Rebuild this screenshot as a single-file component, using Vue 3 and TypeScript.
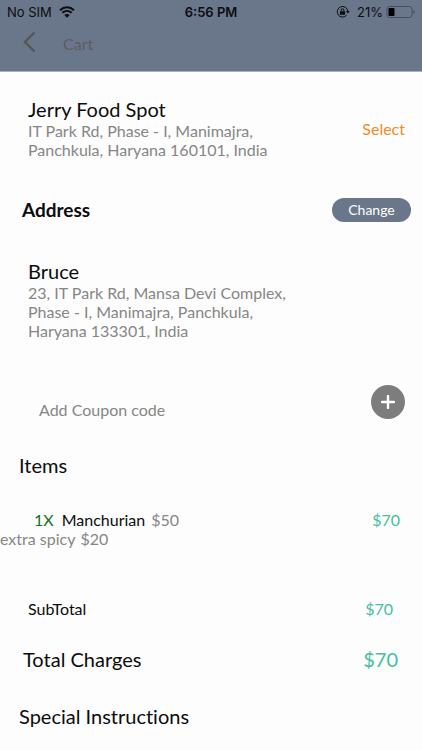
<script setup lang="ts">
import { ref } from 'vue'

interface CartItem {
  quantity: number
  name: string
  price: number
  extra: string
  extraPrice: number
}

const items: CartItem[] = [
  { quantity: 1, name: 'Manchurian', price: 50, extra: 'extra spicy', extraPrice: 20 },
]
const total = items.reduce((sum, i) => sum + i.quantity * (i.price + i.extraPrice), 0)
const coupon = ref('')
</script>

<template>
  <div class="screen">
    <header class="top">
      <div class="status">
        <div class="status-side">
          <span>No SIM</span>
          <svg class="wifi" width="16" height="12" viewBox="0 0 16 12" aria-hidden="true">
            <path d="M1 4.2C5 .4 11 .4 15 4.2" />
            <path d="M3.4 6.8c2.7-2.5 6.5-2.5 9.2 0" />
            <path class="solid" d="M8 11.8 5.3 9c1.5-1.4 3.9-1.4 5.4 0z" />
          </svg>
        </div>
        <span class="clock">6:56 PM</span>
        <div class="status-side right">
          <svg class="lock" width="14" height="14" viewBox="0 0 14 14" aria-hidden="true">
            <path d="M10.6 10.2A5.3 5.3 0 1 1 11.8 6" />
            <path class="solid" d="M9.9 6h3.8l-1.9 2.6zM3.9 6.2h5.2v3.6H3.9z" />
            <path d="M5.2 6.2V5a1.3 1.3 0 0 1 2.6 0v1.2" />
          </svg>
          <span>21%</span>
          <svg class="battery" width="30" height="14" viewBox="0 0 30 14" aria-hidden="true">
            <rect class="shell" x="1" y="1.5" width="25" height="11" rx="2.5" />
            <rect x="2.5" y="3" width="6" height="8" rx="1" />
            <path class="tip" d="M27.5 5c1.7.5 1.7 3.5 0 4z" />
          </svg>
        </div>
      </div>
      <nav class="nav">
        <button class="back" type="button" aria-label="Back">
          <svg width="14" height="22" viewBox="0 0 14 22" aria-hidden="true">
            <path d="M11.5 1.5 2 11l9.5 9.5" />
          </svg>
        </button>
        <h1>Cart</h1>
      </nav>
    </header>

    <main>
      <section class="place">
        <div class="place-text">
          <h2>Jerry Food Spot</h2>
          <p>IT Park Rd, Phase - I, Manimajra, Panchkula, Haryana 160101, India</p>
        </div>
        <button class="select" type="button">Select</button>
      </section>

      <section class="address-bar">
        <h2>Address</h2>
        <button class="change" type="button">Change</button>
      </section>

      <section class="place">
        <div class="place-text">
          <h2>Bruce</h2>
          <p>23, IT Park Rd, Mansa Devi Complex, Phase - I, Manimajra, Panchkula, Haryana 133301, India</p>
        </div>
      </section>

      <form class="coupon" @submit.prevent>
        <input v-model="coupon" type="text" placeholder="Add Coupon code" aria-label="Add Coupon code" />
        <button type="submit" aria-label="Add">
          <svg width="14" height="14" viewBox="0 0 14 14" aria-hidden="true">
            <path d="M7 1v12M1 7h12" />
          </svg>
        </button>
      </form>

      <h2 class="section-title">Items</h2>
      <ul class="items">
        <li v-for="item in items" :key="item.name">
          <div class="item">
            <span class="quantity">{{ item.quantity }}X</span>
            <span class="name">{{ item.name }}</span>
            <span class="price">${{ item.price }}</span>
            <span class="amount">${{ item.quantity * (item.price + item.extraPrice) }}</span>
          </div>
          <div class="extra">
            <span>{{ item.extra }}</span>
            <span>${{ item.extraPrice }}</span>
          </div>
        </li>
      </ul>

      <div class="subtotal">
        <span>SubTotal</span>
        <span class="amount">${{ total }}</span>
      </div>
      <div class="total">
        <span>Total Charges</span>
        <span class="amount">${{ total }}</span>
      </div>

      <h2 class="section-title">Special Instructions</h2>
    </main>
  </div>
</template>

<style>
body {
  background: #fdfdfd;
}
</style>

<style scoped>
.screen {
  color: #0c0c0c;
  font: 16px/19px Lato, sans-serif;
  font-variant-ligatures: none;
}

h1,
h2,
p,
ul {
  margin: 0;
  padding: 0;
  font-weight: 400;
}

h2 {
  font-size: 20px;
  line-height: 24px;
}

button,
input {
  margin: 0;
  padding: 0;
  border: 0;
  background: none;
  font: inherit;
}

button {
  cursor: pointer;
}

svg {
  display: block;
  flex: none;
}

.top {
  background: #6a778b;
  border-bottom: 1px solid #aab1bc;
}

.status {
  display: flex;
  align-items: center;
  height: 24px;
  padding: 0 7px;
  color: #0b0d10;
  font: 13px/24px Inter, sans-serif;
}

.status-side {
  display: flex;
  flex: 1;
  align-items: center;
  gap: 7px;
}

.right {
  justify-content: flex-end;
}

.clock {
  font-weight: 600;
}

.wifi,
.lock {
  fill: none;
  stroke: #0b0d10;
}

.wifi {
  stroke-width: 2;
}

.lock {
  stroke-width: 1;
}

.solid {
  fill: #0b0d10;
  stroke: none;
}

.battery {
  margin: 0 -1px 0 -4px;
}

.shell {
  fill: none;
  stroke: #454e5c;
}

.tip {
  fill: #454e5c;
}

.nav {
  display: flex;
  align-items: center;
  gap: 26px;
  padding: 7px 23px 18px;
  color: #5b5d61;
}

.back svg {
  fill: none;
  stroke: #555555;
  stroke-width: 2.4;
}

h1 {
  padding-top: 3px;
  font-size: 16px;
  line-height: 19px;
}

main {
  padding: 25px 0 20px;
}

.place {
  display: flex;
  align-items: center;
  justify-content: space-between;
  padding: 0 17px 0 28px;
}

.place-text {
  max-width: 260px;
}

.place p {
  color: #868686;
}

.select {
  color: #f08c24;
}

.address-bar {
  display: flex;
  align-items: center;
  justify-content: space-between;
  margin: 39px 0 37px;
  padding: 0 11px 0 22px;
}

.address-bar h2 {
  font-size: 19px;
  font-weight: 700;
}

.change {
  width: 79px;
  border-radius: 12px;
  background: #6a778b;
  color: #ffffff;
  font-size: 14px;
  line-height: 24px;
}

.coupon {
  display: flex;
  align-items: flex-end;
  gap: 16px;
  margin: 45px 0 34px;
  padding: 0 17px 0 39px;
}

.coupon input {
  flex: 1;
  min-width: 0;
  height: 19px;
  color: #0c0c0c;
}

.coupon input::placeholder {
  color: #868686;
  opacity: 1;
}

.coupon button {
  display: grid;
  place-items: center;
  width: 34px;
  height: 34px;
  border-radius: 50%;
  background: #7d7d7d;
}

.coupon path {
  fill: none;
  stroke: #ffffff;
  stroke-width: 2.4;
  stroke-linecap: round;
}

.section-title {
  padding: 0 19px;
}

.items {
  margin: 33px 0 51px;
  list-style: none;
}

.item {
  display: flex;
  padding: 0 22px 0 34px;
}

.quantity {
  margin-right: 8px;
  color: #12701c;
}

.name {
  margin-right: 6px;
}

.price,
.extra {
  color: #868686;
}

.extra {
  display: flex;
  gap: 5px;
}

.amount {
  margin-left: auto;
  color: #45bf9f;
}

.subtotal {
  display: flex;
  padding: 0 29px 0 28px;
}

.total {
  display: flex;
  margin: 29px 0 33px;
  padding: 0 24px 0 23px;
  font-size: 20px;
  line-height: 24px;
}
</style>
